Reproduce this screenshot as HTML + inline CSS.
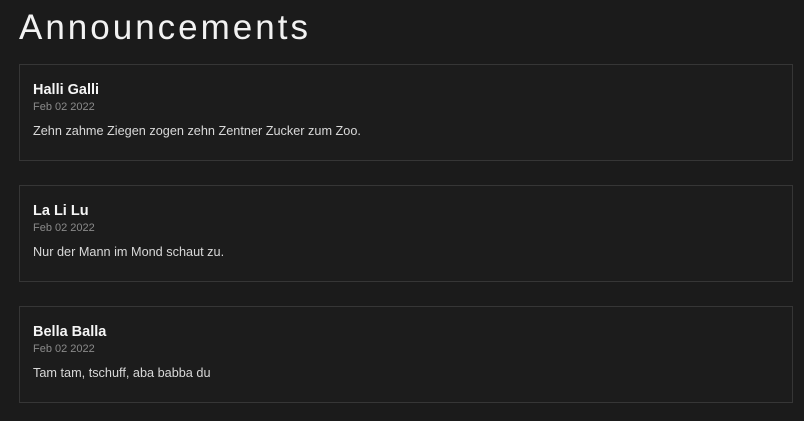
<!DOCTYPE html>
<html><head><style>
body{margin:0;background:#1b1b1b;width:804px;height:421px;overflow:hidden;font-family:"Liberation Sans",sans-serif;color:#e6e6e6}
h1{position:absolute;left:19px;top:6px;margin:0;font-weight:normal;font-size:35px;letter-spacing:3px;color:#f2f2f2;line-height:44px}
.c{position:absolute;left:19px;width:772px;height:95px;border:1px solid #363636;background:#1c1c1c}
.n{position:absolute;left:13px;top:17px;font-weight:bold;font-size:14.5px;color:#f5f5f5}
.d{position:absolute;left:13px;top:36px;font-size:11px;color:#8a8a8a}
.t{position:absolute;left:13px;top:59px;font-size:12.7px;color:#d8d8d8}
</style></head><body>
<h1>Announcements</h1>
<div class="c" style="top:64px"><div class="n">Halli Galli</div><div class="d">Feb 02 2022</div><div class="t">Zehn zahme Ziegen zogen zehn Zentner Zucker zum Zoo.</div></div>
<div class="c" style="top:185px"><div class="n">La Li Lu</div><div class="d">Feb 02 2022</div><div class="t">Nur der Mann im Mond schaut zu.</div></div>
<div class="c" style="top:306px"><div class="n">Bella Balla</div><div class="d">Feb 02 2022</div><div class="t">Tam tam, tschuff, aba babba du</div></div>
</body></html>
